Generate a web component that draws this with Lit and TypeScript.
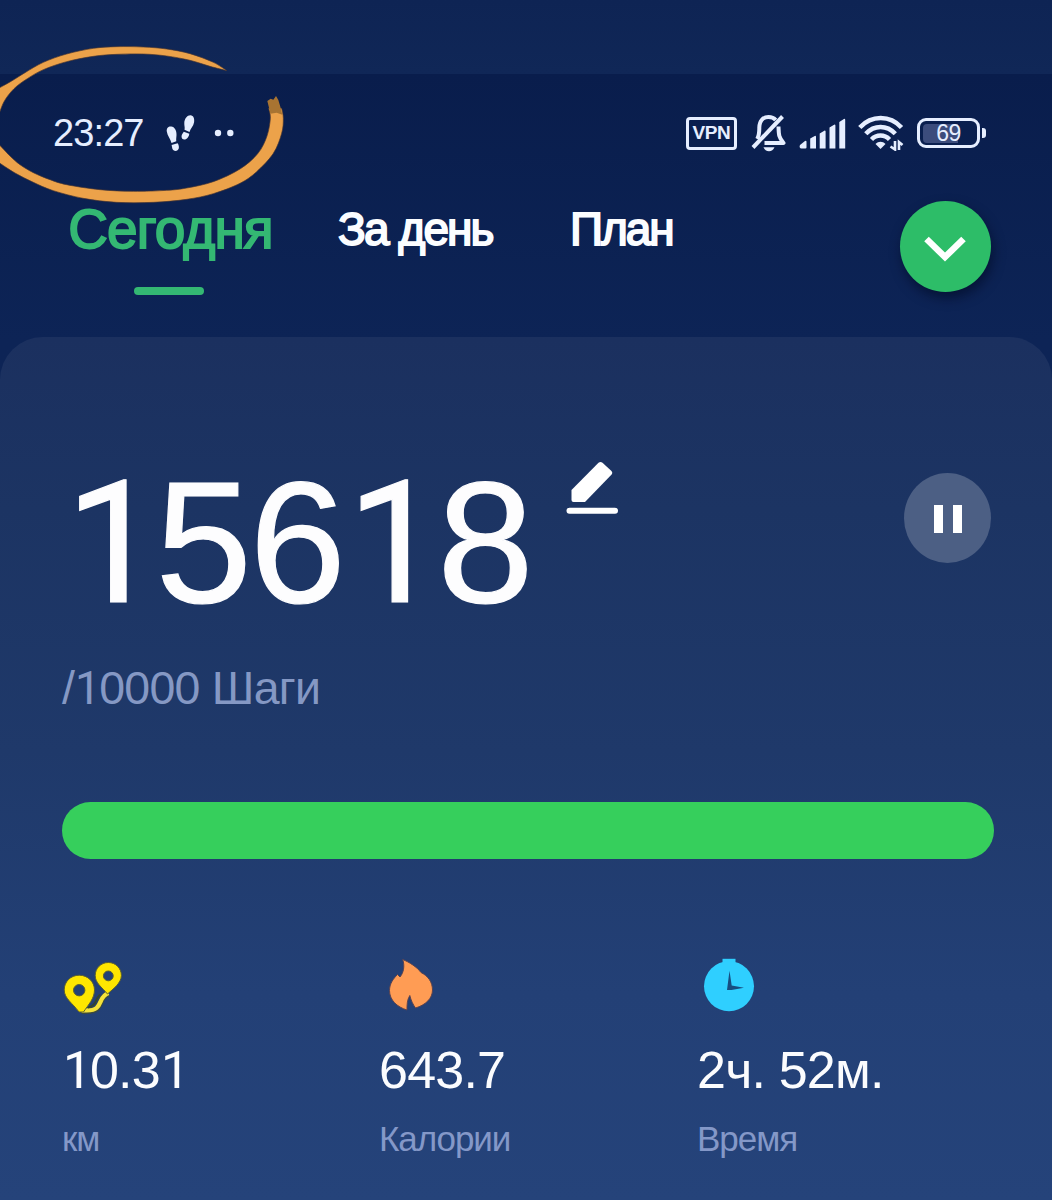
import { LitElement, html, css, svg } from "lit";
import { customElement, property } from "lit/decorators.js";

type Point = [number, number];

/** Smooth Catmull-Rom segment list through the given points. */
function through(points: Point[]): string {
  let d = "";
  for (let i = 0; i < points.length - 1; i++) {
    const a = points[Math.max(i - 1, 0)];
    const b = points[i];
    const c = points[i + 1];
    const e = points[Math.min(i + 2, points.length - 1)];
    d += `C${b[0] + (c[0] - a[0]) / 6} ${b[1] + (c[1] - a[1]) / 6} ${c[0] - (e[0] - b[0]) / 6} ${c[1] - (e[1] - b[1]) / 6} ${c[0]} ${c[1]}`;
  }
  return d;
}

/** Closed brush stroke bounded by an outer edge and an inner edge. */
function brush(outer: Point[], inner: Point[]): string {
  return `M${outer[0]}${through(outer)}L${inner[0]}${through(inner)}Z`;
}

const topStroke = brush(
  [[680, 122], [640, 97], [570, 71], [500, 57], [430, 51], [350, 50], [280, 55], [200, 72], [130, 97], [75, 128], [35, 153], [-6, 176]],
  [[-6, 262], [12, 215], [42, 176], [82, 146], [130, 119], [200, 95], [280, 79], [350, 73], [430, 72], [500, 78], [570, 91], [630, 109], [680, 122]],
);
const bottomStroke = brush(
  [[-6, 396], [45, 429], [100, 457], [160, 482], [250, 505], [350, 517], [460, 517], [560, 508], [640, 491], [720, 460], [770, 425], [820, 370], [845, 310], [850, 265], [845, 235]],
  [[806, 235], [811, 265], [801, 318], [774, 370], [720, 417], [640, 455], [560, 474], [500, 481], [400, 484], [300, 479], [200, 464], [150, 449], [100, 428], [60, 404], [30, 378], [-6, 340]],
);

/** Number whose "1" is set without a foot serif. */
@customElement("plain-figures")
class PlainFigures extends LitElement {
  @property() value = "";
  static styles = css`
    :host { display: inline; }
    .one { font-family: Roboto, "Liberation Sans", sans-serif; font-size: .98em; line-height: 1; margin-left: .02em; margin-right: -.018em; }
  `;
  render() {
    return html`${[...this.value].map((c) => (c === "1" ? html`<span class="one">1</span>` : c))}`;
  }
}

const routeIcon = svg`<svg width="62" height="58" viewBox="0 -3 62 58">
  <path d="M19.500 50c6-.5 11 1 15-2.500 5.500-5 3.500-12 12-15" fill="none" stroke="#3d4a3c" stroke-width="6"/>
  <path d="M19.500 49.500c6-.5 11 1 15-2.500 5.500-5 3.500-12 12-15" fill="none" stroke="#f5e23a" stroke-width="4.300"/>
  <path fill="#ffe600" fill-rule="evenodd" stroke="#5b5f30" stroke-width="1" d="M17.200 14.200C8.700 14.200 2.200 20.700 2.200 28.900c0 8.600 8.300 13 14.800 22.100h4.500c5-7.500 11-13.500 11-22.100 0-8.200-6.800-14.700-15.300-14.700zM17.200 23.500a5.700 5.700 0 1 1 0 11.400 5.700 5.700 0 0 1 0-11.400z"/>
  <path fill="#ffe600" fill-rule="evenodd" stroke="#5b5f30" stroke-width="1" d="M46.300 1.500C38.900 1.500 33.200 7.300 33.200 14.500c0 7.500 6.500 11.500 12.300 18.500 5.500-5 13.900-11 13.900-18.500 0-7.200-5.700-13-13.100-13zM46.300 10a4.900 4.900 0 1 1 0 9.800 4.900 4.900 0 0 1 0-9.800z"/>
  <path d="M26 46.500c4-.5 7-3.500 9-9l3-4" fill="none" stroke="#34452f" stroke-width="2"/>
</svg>`;

const flameIcon = svg`<svg width="56" height="54" viewBox="-9 0 56 54">
  <path fill="#ff9c54" stroke="#5a4350" stroke-width="1" stroke-linejoin="round" d="M14.700 1.500C21 4 29 9 33 14.500c7 3.500 11.500 9.500 11.500 17.500 0 8.500-7 15-17 18-2.500-3.500-4.500-7.500-5.700-12.500C19 42 19 47 19 52 9 49 1.500 42 1.500 32.500c0-6.500 3.500-11.500 8-16L12 19C15.500 15 17 8 14.700 1.500z"/>
</svg>`;

const clockIcon = svg`<svg width="60" height="54" viewBox="-6 0 60 54">
  <path fill="#2fcfff" d="M19.500.8h13v8h-13z"/>
  <circle fill="#2fcfff" cx="26" cy="28.200" r="25"/>
  <path fill="#174d80" d="M26.500 12.700L28.700 27.500 41 29.700 28.500 32H24z"/>
</svg>`;

@customElement("stat-item")
class StatItem extends LitElement {
  @property({ attribute: false }) icon: unknown;
  @property() value = "";
  @property() label = "";
  static styles = css`
    :host { display: flex; flex-direction: column; }
    svg { display: block; }
    .icon { height: 54px; }
    .value { margin-top: 30px; height: 56px; font-size: 52px; line-height: 56px; color: #fbfcfe; white-space: nowrap; letter-spacing: -0.800px; }
    .label { margin-top: 21px; font-size: 35px; line-height: 40px; color: #8498c8; letter-spacing: -1.050px; }
  `;
  render() {
    return html`<div class="icon">${this.icon}</div>
      <div class="value"><plain-figures .value=${this.value}></plain-figures></div>
      <div class="label">${this.label}</div>`;
  }
}

@customElement("app-root")
class AppRoot extends LitElement {
  static styles = css`
    :host { display: block; }
    * { box-sizing: border-box; }
    svg { display: block; flex: none; }
    .screen {
      position: relative; width: 1052px; height: 1200px; overflow: hidden;
      display: flex; flex-direction: column;
      font-family: "Liberation Sans", Arial, sans-serif;
      background: linear-gradient(#091d4c 74px, #0d2456 340px, #0f2858);
    }
    .band { height: 74px; flex: none; background: linear-gradient(#0e2454, #102757); }
    .status { height: 118px; flex: none; display: flex; align-items: center; padding: 0 66px 0 53px; color: #e6eeff; }
    .time { width: 91px; white-space: nowrap; font-size: 38px; line-height: 40px; letter-spacing: -0.900px; }
    .steps { margin-left: 22px; }
    .dots { margin-left: 18px; }
    .sys { margin-left: auto; display: flex; align-items: center; height: 44px; }
    .vpn { width: 51px; height: 33px; border: 3.500px solid #e6eeff; border-radius: 4px; display: flex; align-items: center; justify-content: center; font-weight: 700; font-size: 19px; line-height: 20px; letter-spacing: -0.400px; }
    .bell { margin-left: 14px; }
    .signal { margin-left: 12px; }
    .wifi { margin-left: 12px; }
    .battery { margin-left: 13px; display: flex; align-items: center; }
    .cell { width: 63px; height: 30px; border: 3px solid #e6eeff; border-radius: 9px; padding: 3px; display: grid; }
    .level { grid-area: 1 / 1; width: 69%; background: #3c4c7c; border-radius: 4px 0 0 4px; }
    .pct { grid-area: 1 / 1; z-index: 1; text-align: center; font-size: 23px; line-height: 19px; letter-spacing: -0.500px; }
    .cap { width: 4px; height: 10px; margin-left: 2px; border-radius: 0 3px 3px 0; background: #e6eeff; }
    .tabs { height: 145px; flex: none; display: flex; align-items: flex-start; padding: 0 61px 0 67px; color: #fbfdff; }
    .tab { white-space: nowrap; font-size: 46px; line-height: 50px; padding-top: 12px; -webkit-text-stroke: 1.800px currentColor; }
    .today { width: 207px; padding-top: 9px; font-size: 55px; line-height: 56px; color: #34b873; letter-spacing: -0.900px; display: flex; flex-direction: column; align-items: center; }
    .line { width: 70px; height: 8px; border-radius: 4px; background: #34b873; margin: 30px 3px 0 0; }
    .day { margin-left: 64px; width: 158px; letter-spacing: -1.900px; }
    .plan { margin-left: 74px; letter-spacing: -2.100px; }
    .more { margin-left: auto; margin-top: 9px; padding: 2px 2px 0 0; width: 91px; height: 91px; border-radius: 50%; background: #2dbd68; box-shadow: 2px 6px 12px rgba(2, 10, 35, .6); display: flex; align-items: center; justify-content: center; }
    .card { flex: 1; display: flex; flex-direction: column; border-radius: 43px 43px 0 0; background: linear-gradient(#1b305f, #1c3463 20%, #1f396a 48%, #234076 76%, #25437a); padding: 123px 58px 0 62px; }
    .top { display: flex; align-items: flex-start; height: 180px; }
    .count { margin-top: -4px; width: 472px; font-size: 173.500px; line-height: 172px; letter-spacing: -2.400px; color: #fdfdfe; height: 172px; -webkit-text-stroke: 1.200px currentColor; white-space: nowrap; }
    .edit { margin: 0 0 0 32px; }
    .pause { margin: 13px 3px 0 auto; padding-top: 2px; width: 87px; height: 90px; border-radius: 50%; background: #4c5f84; display: flex; align-items: center; justify-content: center; gap: 10px; }
    .stick { width: 9px; height: 28px; background: #fff; }
    .goal { margin-top: 23px; height: 50px; font-size: 46.500px; line-height: 50px; letter-spacing: -0.750px; color: #8598c4; white-space: nowrap; }
    .track { margin-top: 89px; height: 57px; flex: none; border-radius: 29px; background: #36cf5c; }
    .stats { margin-top: 99px; display: grid; grid-template-columns: 317px 318px 1fr; }
    .scribble { position: absolute; left: 0; top: 30px; }
  `;

  render() {
    return html`<div class="screen">
      <div class="band"></div>
      <div class="status">
        <span class="time">23:27</span>
        <svg class="steps" width="30" height="38" viewBox="0 0 30 38" fill="#e6eeff">
          <path d="M.8 17.500C.3 14 2.500 12.200 5.200 12.500c3.500.4 5.500 4 5.300 8.500-.1 2.600-.5 4-.2 6.200L5.500 29C4.500 25 1.300 21.500.8 17.500z"/>
          <path d="M5.600 31l6-1.700c1.500 2 2 5.500-.1 7-2 1.300-4.600.3-5.200-1.800z"/>
          <path d="M18.300 8.800C18.500 4.500 21.500 1 24.500 1.200c3 .2 4.200 3.400 3.600 7-.6 4-3.600 6-4.600 9.800l-5-2.200c.6-2.400-.4-4-.2-7z"/>
          <path d="M17.800 17.800l5.500 2c-.3 3-2.500 6-5.200 5.800-2.400-.2-3-2.800-2.200-4.800.5-1.100 1.200-2 1.900-3z"/>
        </svg>
        <svg class="dots" width="20" height="8" viewBox="0 0 20 8" fill="#e6eeff"><circle cx="4" cy="4" r="3.200"/><circle cx="16.300" cy="4" r="3.200"/></svg>
        <div class="sys">
          <div class="vpn">VPN</div>
          <svg class="bell" width="36" height="40" viewBox="0 0 36 40" fill="none" stroke="#e6eeff">
            <path d="M6.200 26C8.500 22 8.300 18.500 8.300 14.500 8.500 8 12 4 17.500 4c3 0 5.500 1 7.200 3M27.500 13.500c.3 8 0 10.500 5 16.500H13.500" stroke-width="4" stroke-linejoin="round"/>
            <path d="M2 34.500L31.500 3.500" stroke-width="4"/>
            <path d="M12.500 34.300h11c-1.200 2.800-3 4-5.500 4s-4.500-1.200-5.500-4z" fill="#e6eeff" stroke="none"/>
          </svg>
          <svg class="signal" width="47" height="32" viewBox="0 0 47 32" fill="#e6eeff">
            <path d="M1 28L6 24q1.500-.6 1.500 1v5.500q0 1-1 1H2.500C.5 31.500.2 29.500 1 28z"/>
            <path d="M11.200 21.500l5-2.700q.8 0 .8 1V31.500h-5.800zM20.700 16.500l5-3q.9 0 .9 1v17h-5.900zM30.500 10.500l5-3q.9 0 .9 1v23h-5.900zM40.300 5l5-3.200q.9 0 .9 1v28.700h-5.900z"/>
          </svg>
          <svg class="wifi" width="46" height="36" viewBox="0 0 46 36" fill="none" stroke="#e6eeff" stroke-width="4.500">
            <path d="M1.800 12.500C13.500-.1 32-.1 43.500 12.500M7.800 18.800c8.500-9 21-9 29.500 0M13.500 24.500c5-5.200 13-5.200 18 0"/>
            <path d="M17.500 29c3-3 7-3 10 0L22.500 34z" fill="#e6eeff" stroke="none"/>
            <path d="M37 26v8.500l-4.500-3M41 35v-8l3.500 3" stroke-width="2.600"/>
          </svg>
          <div class="battery">
            <div class="cell"><div class="level"></div><div class="pct">69</div></div>
            <div class="cap"></div>
          </div>
        </div>
      </div>
      <div class="tabs">
        <div class="tab today">Сегодня<div class="line"></div></div>
        <div class="tab day">За день</div>
        <div class="tab plan">План</div>
        <div class="more">
          <svg width="44" height="30" viewBox="0 0 44 30"><path d="M3.500 6L22 24 40.500 6" fill="none" stroke="#fff" stroke-width="6.500"/></svg>
        </div>
      </div>
      <div class="card">
        <div class="top">
          <div class="count"><plain-figures .value=${"15618"}></plain-figures></div>
          <svg class="edit" width="54" height="56" viewBox="0 0 54 56" fill="#fff">
            <path d="M32.500 2.800q2-1.700 4 0l8.700 7.900q2 2 .2 4L19 42H7.500q-2 0-2-2V30z"/>
            <rect x=".5" y="47.700" width="51.500" height="6" rx="3"/>
          </svg>
          <div class="pause"><div class="stick"></div><div class="stick"></div></div>
        </div>
        <div class="goal"><plain-figures .value=${"/10000 Шаги"}></plain-figures></div>
        <div class="track"></div>
        <div class="stats">
          <stat-item .icon=${routeIcon} value="10.31" label="км"></stat-item>
          <stat-item .icon=${flameIcon} value="643.7" label="Калории"></stat-item>
          <stat-item .icon=${clockIcon} value="2ч. 52м." label="Время"></stat-item>
        </div>
      </div>
      <svg class="scribble" width="300" height="190" viewBox="0 0 900 570">
        <path fill="#eca24a" stroke="#4a3632" stroke-width="2" d=${topStroke} />
        <path fill="#eca24a" stroke="#4a3632" stroke-width="2" d=${bottomStroke} />
        <path fill="#a87432" d="M802 213l10-7 8 3 8-11 7 12 6 20 6 24-17-6-19 3-4-18z"/>
      </svg>
    </div>`;
  }
}
